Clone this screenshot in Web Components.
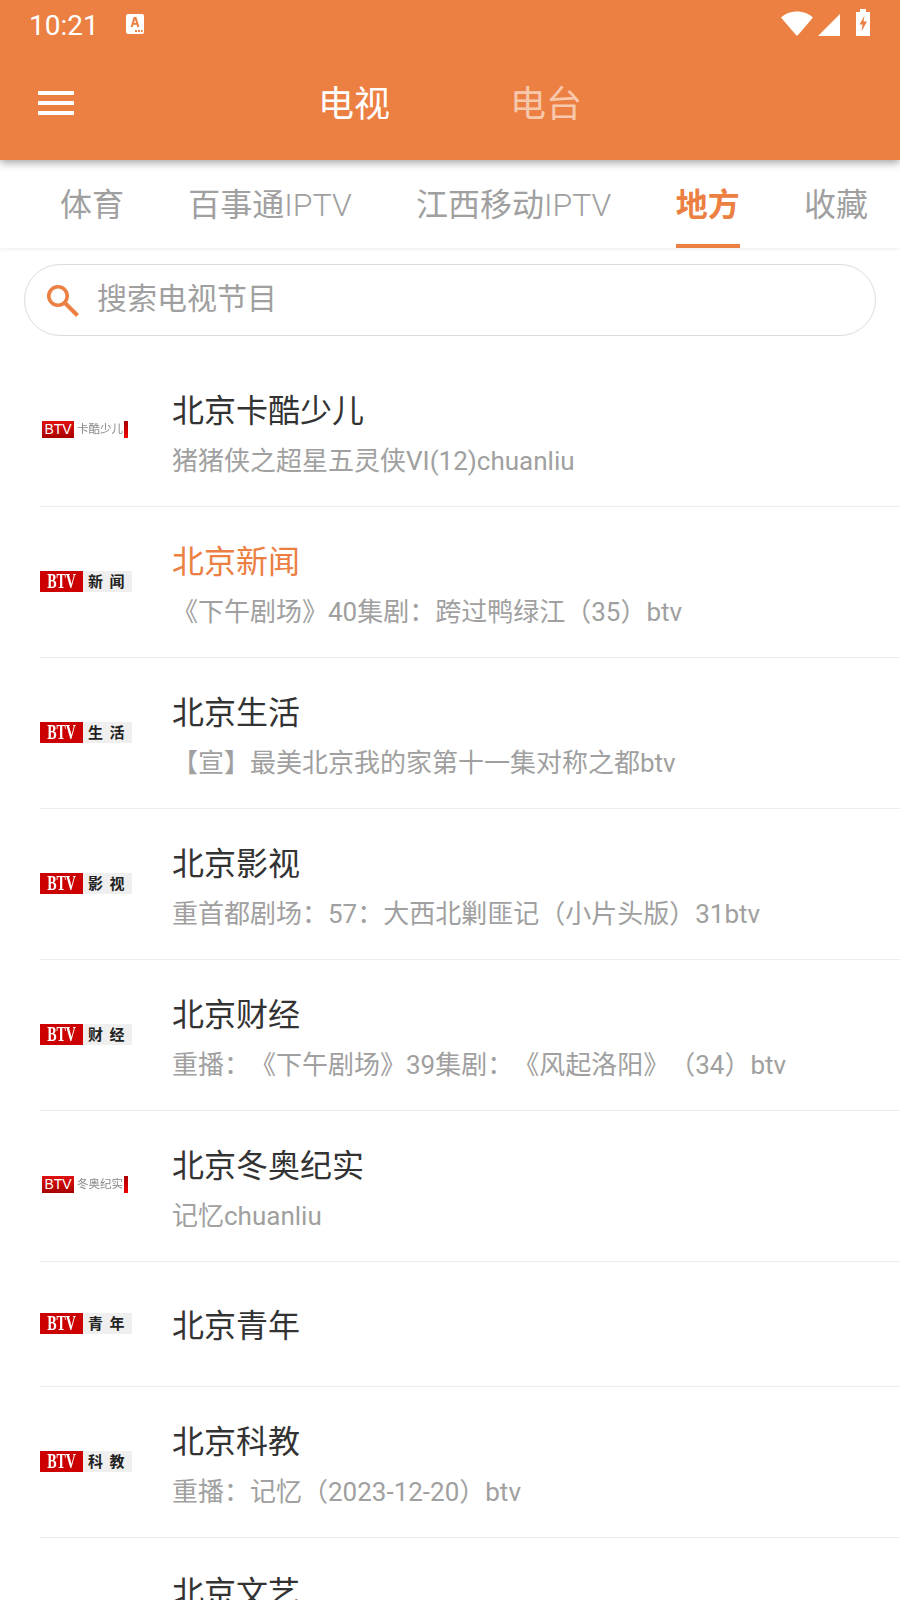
<!DOCTYPE html>
<html lang="zh">
<head>
<meta charset="utf-8">
<title>电视</title>
<style>
  html, body { margin: 0; padding: 0; height: 1600px; overflow: hidden; background: #fff; }
  body { font-family: Roboto, "Noto Sans CJK SC", sans-serif; text-spacing-trim: space-all; }
</style>
</head>
<body>
<tv-app></tv-app>

<template id="status-bar-tpl">
  <style>
    :host { display: flex; align-items: center; height: 50px; padding: 0 30px 0 29px; color: #fff; }
    .time { font-size: 28px; line-height: 50px; width: 96px; margin-top: 1px; }
    .spacer { flex: 1; }
    svg { display: block; }
    .right { display: flex; align-items: flex-end; margin-top: -5px; height: 27px; }
  </style>
  <span class="time">10:21</span>
  <svg width="20" height="22" viewBox="0 0 20 22" style="margin-top:-3px">
    <path fill="#fff" d="M3 1h14a2 2 0 0 1 2 2v16a2 2 0 0 1-2 2H3a2 2 0 0 1-2-2V3a2 2 0 0 1 2-2z"/>
    <path fill="#ec8043" d="M8.600 4h2.800l3 10h-2.200l-.6-2.200H8.400L7.800 14H5.600zM9 10h2l-1-3.600z"/>
    <path fill="#ec8043" d="M10 17h2v2h-2zM13 17h2v2h-2zM16 17h1.600v2H16z"/>
  </svg>
  <span class="spacer"></span>
  <div class="right">
    <svg width="32" height="25" viewBox="0 0 32 25"><path fill="#fff" d="M0 6.500C4 2.800 9.500.5 16 .5s12 2.300 16 6L17 24a1.300 1.300 0 0 1-2 0z"/></svg>
    <svg width="22" height="22" viewBox="0 0 22 22" style="margin-left:5px"><path fill="#fff" d="M22 0v22H0z"/></svg>
    <svg width="14" height="27" viewBox="0 0 14 27" style="margin-left:16px"><path fill="#fff" d="M4 0h6v3h4v24H0V3h4z"/><path fill="#ec8043" d="M8.500 6.500 3.500 15.500h3l-1 7 5.500-10H7.500z"/></svg>
  </div>
</template>

<template id="app-header-tpl">
  <style>
    :host { display: block; background: #ec8043; height: 160px; box-shadow: 0 3px 8px rgba(0,0,0,.35); position: relative; z-index: 2; }
    .bar { display: flex; align-items: center; height: 110px; }
    .menu { width: 36px; margin-left: 38px; margin-top: -4px; display: flex; flex-direction: column; gap: 5.500px; }
    .menu i { display: block; height: 4.500px; background: #fff; }
    .titles { display: flex; gap: 120px; margin-left: 244px; font-size: 36px; color: #fff; margin-top: -8px; }
    .off { color: #f8c8ac; }
  </style>
  <status-bar></status-bar>
  <div class="bar">
    <div class="menu"><i></i><i></i><i></i></div>
    <div class="titles"><span>电视</span><span class="off">电台</span></div>
  </div>
</template>

<template id="tab-strip-tpl">
  <style>
    :host { display: flex; height: 88px; padding-left: 60px; gap: 64.300px; background: #fff; box-shadow: 0 1px 4px rgba(0,0,0,.08); position: relative; z-index: 1; box-sizing: border-box; }
    ::slotted(tab-item) { flex: none; }
  </style>
  <slot></slot>
</template>

<template id="tab-item-tpl">
  <style>
    :host { display: block; height: 88px; box-sizing: border-box; font-size: 32px; line-height: 90px; color: #a0a0a0; white-space: nowrap; }
    :host([active]) { color: #ec8043; font-weight: 700; border-bottom: 4px solid #ec8043; }
    ::slotted(span) { font-weight: 300; }
  </style>
  <slot></slot>
</template>

<template id="search-box-tpl">
  <style>
    :host { display: flex; align-items: center; box-sizing: border-box; height: 72px; margin: 16px 24px 0; padding-left: 22px; border: 1px solid #dcdcdc; border-radius: 36px; color: #a0a0a0; font-size: 30px; line-height: 40px; background: #fff; }
    svg { display: block; margin-right: 18px; margin-top: 2px; }
    .label { margin-top: -2px; }
  </style>
  <svg width="32" height="32" viewBox="0 0 32 32" fill="none" stroke="#ec8043">
    <circle cx="11" cy="11" r="9.200" stroke-width="3.600"/>
    <path d="M18 18 30.500 30.500" stroke-width="4"/>
  </svg>
  <span class="label"><slot></slot></span>
</template>

<template id="btv-logo-tpl">
  <style>
    :host { display: flex; align-items: center; width: 92px; height: 21px; margin-top: -2px; background: #efefef; font-family: "Liberation Sans", "Noto Sans CJK SC", sans-serif; }
    .mark { width: 43px; height: 21px; margin-right: 1px; background: #cc0000; color: #fff; font-family: "Liberation Serif", serif; font-weight: 700; font-size: 20px; line-height: 21px; text-align: center; flex: none; }
    .mark span { display: inline-block; transform: scaleX(.7); }
    .name { flex: 1; color: #222; font-weight: 700; font-size: 15px; line-height: 21px; letter-spacing: 6.500px; padding-left: 4px; white-space: nowrap; overflow: hidden; }
    :host([small]) { width: 86px; height: 17px; margin-left: 2px; margin-top: -3px; background: #fff; }
    :host([small]) .mark { width: 32px; height: 17px; margin-right: 0; font-family: "Liberation Sans", sans-serif; font-size: 14px; font-weight: 400; line-height: 17px; background: linear-gradient(#e01010, #a80000); }
    :host([small]) .mark span { transform: none; }
    :host([small]) .name { font-size: 11.500px; line-height: 17px; letter-spacing: 0; padding-left: 3px; color: #888; font-weight: 400; filter: blur(.4px); }
    :host([small]) .end { width: 4px; height: 17px; background: linear-gradient(#a80000, #f00000); flex: none; }
  </style>
  <span class="mark"><span>BTV</span></span><span class="name"></span><span class="end"></span>
</template>

<template id="channel-row-tpl">
  <style>
    :host { display: flex; align-items: center; height: 151px; margin-left: 40px; border-bottom: 1px solid #ececec; box-sizing: border-box; }
    :host([short]) { height: 125px; }
    .logo { width: 132px; flex: none; }
    .text { min-width: 0; display: flex; flex-direction: column; gap: 11px; padding-top: 9px; }
    :host([short]) .text { padding-top: 4px; }
    .name { font-size: 32px; line-height: 40px; color: #333; white-space: nowrap; }
    :host([playing]) .name { color: #ec8043; }
    .sub { font-size: 26px; line-height: 38px; min-height: 38px; color: #a0a0a0; white-space: nowrap; }
    :host([short]) .sub { display: none; }
  </style>
  <div class="logo"><btv-logo></btv-logo></div>
  <div class="text"><div class="name"><slot></slot></div><div class="sub"></div></div>
</template>

<template id="tv-app-tpl">
  <style>
    :host { display: block; height: 1600px; overflow: hidden; }
    .list { padding-top: 20px; }
  </style>
  <app-header></app-header>
  <tab-strip>
    <tab-item>体育</tab-item>
    <tab-item>百事通<span>IPTV</span></tab-item>
    <tab-item>江西移动<span>IPTV</span></tab-item>
    <tab-item active>地方</tab-item>
    <tab-item>收藏</tab-item>
  </tab-strip>
  <search-box>搜索电视节目</search-box>
  <div class="list">
    <channel-row logo="卡酷少儿" small sub="猪猪侠之超星五灵侠VI(12)chuanliu">北京卡酷少儿</channel-row>
    <channel-row logo="新闻" playing sub="《下午剧场》40集剧：跨过鸭绿江（35）btv">北京新闻</channel-row>
    <channel-row logo="生活" sub="【宣】最美北京我的家第十一集对称之都btv">北京生活</channel-row>
    <channel-row logo="影视" sub="重首都剧场：57：大西北剿匪记（小片头版）31btv">北京影视</channel-row>
    <channel-row logo="财经" sub="重播：《下午剧场》39集剧：《风起洛阳》（34）btv">北京财经</channel-row>
    <channel-row logo="冬奥纪实" small sub="记忆chuanliu">北京冬奥纪实</channel-row>
    <channel-row logo="青年" short>北京青年</channel-row>
    <channel-row logo="科教" sub="重播：记忆（2023-12-20）btv">北京科教</channel-row>
    <channel-row logo="文艺" sub="">北京文艺</channel-row>
  </div>
</template>

<script>
'use strict'

// Base sencilla: clona el template con el id indicado en un shadow root abierto.
class TplElement extends HTMLElement {
    constructor(id) {
        super();
        this.attachShadow({ mode: 'open' });
        this.shadowRoot.appendChild(document.getElementById(id).content.cloneNode(true));
    }
}

class StatusBar extends TplElement { constructor() { super('status-bar-tpl'); } }
class AppHeader extends TplElement { constructor() { super('app-header-tpl'); } }
class TabStrip extends TplElement { constructor() { super('tab-strip-tpl'); } }
class TabItem extends TplElement { constructor() { super('tab-item-tpl'); } }
class SearchBox extends TplElement { constructor() { super('search-box-tpl'); } }
class TvApp extends TplElement { constructor() { super('tv-app-tpl'); } }

class BtvLogo extends TplElement {
    constructor() { super('btv-logo-tpl'); }
    connectedCallback() {
        this.shadowRoot.querySelector('.name').textContent = this.getAttribute('name') || '';
    }
}

class ChannelRow extends TplElement {
    constructor() { super('channel-row-tpl'); }
    connectedCallback() {
        const logo = this.shadowRoot.querySelector('btv-logo');
        logo.setAttribute('name', this.getAttribute('logo') || '');
        logo.toggleAttribute('small', this.hasAttribute('small'));
        logo.connectedCallback();
        this.shadowRoot.querySelector('.sub').textContent = this.getAttribute('sub') || '';
    }
}

// El orden importa: los hijos deben existir antes de que se clone tv-app.
customElements.define('status-bar', StatusBar);
customElements.define('app-header', AppHeader);
customElements.define('tab-item', TabItem);
customElements.define('tab-strip', TabStrip);
customElements.define('search-box', SearchBox);
customElements.define('btv-logo', BtvLogo);
customElements.define('channel-row', ChannelRow);
customElements.define('tv-app', TvApp);
</script>
</body>
</html>
